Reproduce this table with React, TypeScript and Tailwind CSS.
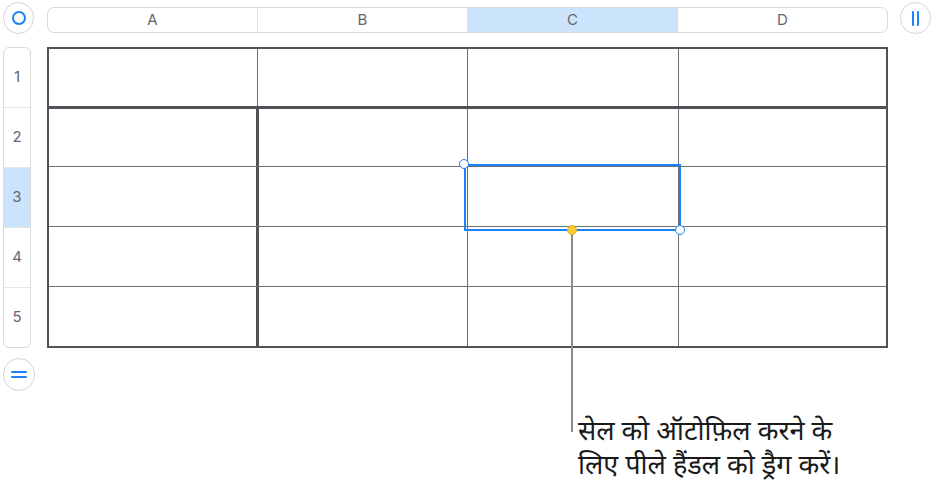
import React from "react";

const rowsSpec = [
  { h: "h-[60px]", border: "border-b-[3px] border-[#4f5358]" },
  { h: "h-[58px]", border: "border-b border-[#6b6e72]" },
  { h: "h-[60px]", border: "border-b border-[#6b6e72]" },
  { h: "h-[60px]", border: "border-b border-[#6b6e72]" },
  { h: "flex-1", border: "" },
];

function TableGrid() {
  return (
    <div className="w-[841px] h-[301px] border-2 border-[#4f5358] flex flex-col">
      {rowsSpec.map((r, i) => (
        <div key={i} className={`flex ${r.h} ${r.border}`}>
          {i === 0 ? (
            <div className="w-[209px] border-r border-[#6b6e72]" />
          ) : (
            <div className="w-[210px] border-r-[3px] border-[#4f5358]" />
          )}
          {i === 0 ? (
            <div className="w-[210px] border-r border-[#6b6e72]" />
          ) : (
            <div className="w-[209px] border-r border-[#6b6e72]" />
          )}
          <div className="w-[211px] border-r border-[#6b6e72]" />
          <div className="flex-1" />
        </div>
      ))}
    </div>
  );
}

export default function App() {
  const hdrFont = { fontFamily: "Inter, 'Liberation Sans', sans-serif" };
  return (
    <div className="relative w-[935px] h-[491px] bg-white overflow-hidden" style={hdrFont}>
      {/* top row */}
      <div className="flex items-start pt-[2px] pl-[3px]">
        <div className="w-[31px] h-[32px] rounded-full border border-[#d4d4d4] bg-white flex items-center justify-center">
          <div className="w-[14px] h-[14px] rounded-full border-2 border-[#1a82fb]" />
        </div>
        <div className="ml-[13px] mt-[5px] w-[841px] h-[26px] border border-[#d9d9d9] rounded-[7px] flex overflow-hidden text-[15px] text-[#66666b]">
          <div className="w-[210px] border-r border-[#e2e2e2] flex items-center justify-center">A</div>
          <div className="w-[209px] flex items-center justify-center">B</div>
          <div className="w-[211px] bg-[#cce3fc] flex items-center justify-center">C</div>
          <div className="flex-1 flex items-center justify-center">D</div>
        </div>
        <div className="ml-[12px] w-[31px] h-[32px] rounded-full border border-[#d4d4d4] bg-white flex items-center justify-center gap-[3px]">
          <div className="w-[2px] h-[15px] bg-[#1a82fb] rounded" />
          <div className="w-[2px] h-[15px] bg-[#1a82fb] rounded" />
        </div>
      </div>

      {/* body */}
      <div className="flex mt-[13px] pl-[3px]">
        <div className="w-[28px] h-[301px] border border-[#d9d9d9] rounded-[6px] flex flex-col overflow-hidden text-[15px] text-[#66666b]">
          {[1, 2, 3, 4, 5].map((n) => (
            <div
              key={n}
              className={`flex-1 flex items-center justify-center ${n < 5 ? "border-b border-[#e6e6e6]" : ""} ${n === 3 ? "bg-[#cce3fc]" : ""}`}
            >
              {n}
            </div>
          ))}
        </div>
        <div className="ml-[16px]">
          <TableGrid />
        </div>
      </div>

      {/* bottom button */}
      <div className="mt-[10px] ml-[3px] w-[32px] h-[33px] rounded-full border border-[#d4d4d4] bg-white flex flex-col items-center justify-center gap-[3px]">
        <div className="w-[16px] h-[2px] bg-[#1a82fb] rounded" />
        <div className="w-[16px] h-[2px] bg-[#1a82fb] rounded" />
      </div>

      {/* selection overlay */}
      <div className="absolute left-[464px] top-[164px] w-[217px] h-[67px] border-2 border-[#1a82fb]" />
      <div className="absolute left-[459px] top-[159px] w-[10px] h-[10px] rounded-full bg-white border-[1.5px] border-[#1a82fb]" />
      <div className="absolute left-[675px] top-[225px] w-[10px] h-[10px] rounded-full bg-white border-[1.5px] border-[#1a82fb]" />
      <div className="absolute left-[571px] top-[230px] w-[2px] h-[202px] bg-[#8c8c8c]" />
      <div className="absolute left-[567px] top-[225px] w-[10px] h-[10px] rounded-full bg-[#f8cb35] border border-[#d9a91a]" />

      {/* callout */}
      <div
        className="absolute left-[578px] top-[417px] text-[27px] leading-[34px] text-[#1a1a1a]"
        style={{ fontFamily: "'Noto Sans Devanagari', 'Noto Sans', 'Lohit Devanagari', sans-serif" }}
      >
        <div>सेल को ऑटोफ़िल करने के</div>
        <div>लिए पीले हैंडल को ड्रैग करें।</div>
      </div>
    </div>
  );
}
